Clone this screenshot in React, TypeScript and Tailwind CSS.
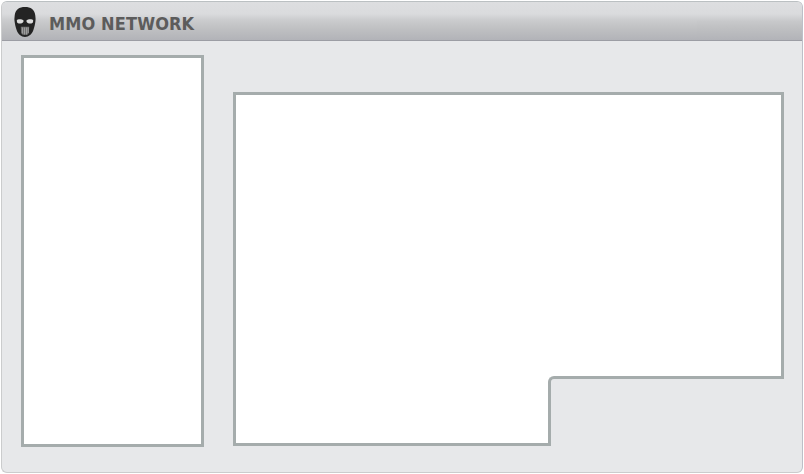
function SkullMask() {
  return (
    <svg width="24" height="32" viewBox="0 0 24 32" aria-hidden="true">
      <path
        d="M12 1C6.300 1 2.200 3.500 1.700 9.500C1.500 12 1.200 13 1.600 15.500C2 18.500 2.400 20.500 3.600 24C4.900 28 8.200 31 12 31C15.800 31 19.100 28 20.400 24C21.600 20.500 22 18.500 22.400 15.500C22.800 13 22.500 12 22.300 9.500C21.800 3.500 17.700 1 12 1Z"
        fill="#242424"
      />
      <path
        d="M3.800 14.200C4.800 12.900 9 12.800 10.700 14.700C10.500 17.800 5 18.500 4 16.300ZM20.200 14.200C19.200 12.900 15 12.800 13.300 14.700C13.500 17.800 19 18.500 20 16.300Z"
        fill="#dcdcdc"
      />
      <path d="M7.800 20.800H16.200L15.900 27L14.500 28.800H9.500L8.100 27Z" fill="#707070" />
      <path d="M9.500 21.500V27.500M11.500 21.500V28.500M13.500 21.500V28.500M15.200 21.500V27" stroke="#a8a8a8" strokeWidth="0.8" />
    </svg>
  );
}

function Header() {
  return (
    <header className="flex h-[39px] items-start border-b border-[#9c9da4] bg-[linear-gradient(to_bottom,#dddee0_0px,#dadbdd_12px,#cbccce_18px,#c0c1c3_26px,#b2b3b8_38px)] pl-[11px]">
      <div className="mt-[4px] shrink-0">
        <SkullMask />
      </div>
      <h1 className="ml-[12px] mt-[10px] grow whitespace-nowrap font-['DejaVu_Sans_Condensed','DejaVu_Sans',sans-serif] text-[18px] font-bold leading-6 tracking-[0.12px] text-[#5c5c5c]">
        MMO NETWORK
      </h1>
      <div className="h-[38px] w-[105px] bg-[linear-gradient(to_bottom,#dddee0_0px,#dadbdd_12px,#c8c9cb_19px,#bfc0c2_26px,#b2b3b8_38px)]" />
    </header>
  );
}

export default function App() {
  return (
    <div className="h-[474px] w-[804px] bg-white pl-px pt-px">
      <div className="h-[472px] w-[802px] overflow-hidden rounded-[6px] border border-t-[#bbc0c2] border-r-[#bdbfc7] border-b-[#cbcccd] border-l-[#cbcccd] bg-[#e7e8ea]">
        <Header />
        <main className="flex items-start pl-[19px] pt-[14px]">
          <aside className="h-[392px] w-[183px] border-[3px] border-[#a5acac] bg-white" />
          <section className="ml-[29px] mt-[37px] w-[551px]">
            <div className="h-[284px] border-x-[3px] border-t-[3px] border-[#a5acac] bg-white" />
            <div className="flex h-[70px]">
              <div className="w-[315px] border-b-[3px] border-l-[3px] border-[#a5acac] bg-white" />
              <div className="flex w-[236px] flex-col bg-[linear-gradient(to_bottom_right,#ffffff_0px,#ffffff_4px,#e7e8ea_5px)]">
                <div className="grow rounded-tl-[6px] border-l-[3px] border-t-[3px] border-[#a5acac] bg-[#e7e8ea]" />
                <div className="h-[3px] w-[3px] bg-[#a5acac]" />
              </div>
            </div>
          </section>
        </main>
      </div>
    </div>
  );
}
